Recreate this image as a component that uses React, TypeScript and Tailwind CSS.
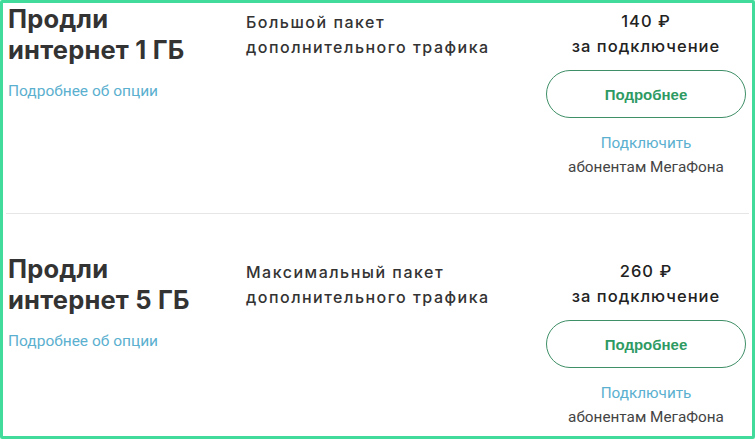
import React from "react";

const items = [
  { title: ["Продли", "интернет 1 ГБ"], desc: ["Большой пакет", "дополнительного трафика"], price: "140 ₽" },
  { title: ["Продли", "интернет 5 ГБ"], desc: ["Максимальный пакет", "дополнительного трафика"], price: "260 ₽" },
];

function Row({ item, first }: { item: (typeof items)[number]; first: boolean }) {
  return (
    <div
      className={
        first
          ? "flex h-[211px] border-b border-[#e6e6e6] mx-[3px]"
          : "flex h-[219px] pt-[39px] mx-[3px]"
      }
    >
      <div className="w-[240px] pl-[2px] flex flex-col">
        <div className="text-[25.5px] leading-[31px] font-bold text-[#333] font-['Inter',sans-serif] tracking-[0.2px]">
          <div>{item.title[0]}</div>
          <div>{item.title[1]}</div>
        </div>
        <div className="mt-[17px] text-[15.5px] leading-[18px] text-[#5bb0cf] font-['Roboto',sans-serif]">
          Подробнее об опции
        </div>
      </div>
      <div className="w-[300px] pt-[7px] text-[16px] leading-[25px] font-medium text-[#333] font-['Inter',sans-serif] tracking-[1.5px]">
        <div>{item.desc[0]}</div>
        <div>{item.desc[1]}</div>
      </div>
      <div className="w-[200px] flex flex-col items-center pt-[6px]">
        <div className="text-[16.5px] leading-[25px] font-medium text-[#222] font-['Inter',sans-serif] tracking-[1px]">
          {item.price}
        </div>
        <div className="text-[16.5px] leading-[25px] font-medium text-[#222] font-['Inter',sans-serif] tracking-[1px]">
          за подключение
        </div>
        <div className="mt-[11px] w-[200px] h-[48px] rounded-full border border-[#3f8f67] flex items-center justify-center pt-[2px] text-[15px] font-bold text-[#2e9a63] font-['Liberation_Sans',sans-serif]">
          Подробнее
        </div>
        <div className="mt-[15px] text-[15.3px] leading-[20px] text-[#5bb0cf] font-['Roboto',sans-serif]">
          Подключить
        </div>
        <div className="mt-[4px] text-[15.3px] leading-[20px] text-[#444] font-['Roboto',sans-serif]">
          абонентам МегаФона
        </div>
      </div>
    </div>
  );
}

export default function App() {
  return (
    <div className="w-[755px] h-[439px] bg-white overflow-hidden">
      <div className="w-[755px] h-[439px] border-[3px] border-[#41dc9c] rounded-[2px] overflow-hidden">
        {items.map((it, i) => (
          <Row key={i} item={it} first={i === 0} />
        ))}
      </div>
    </div>
  );
}
